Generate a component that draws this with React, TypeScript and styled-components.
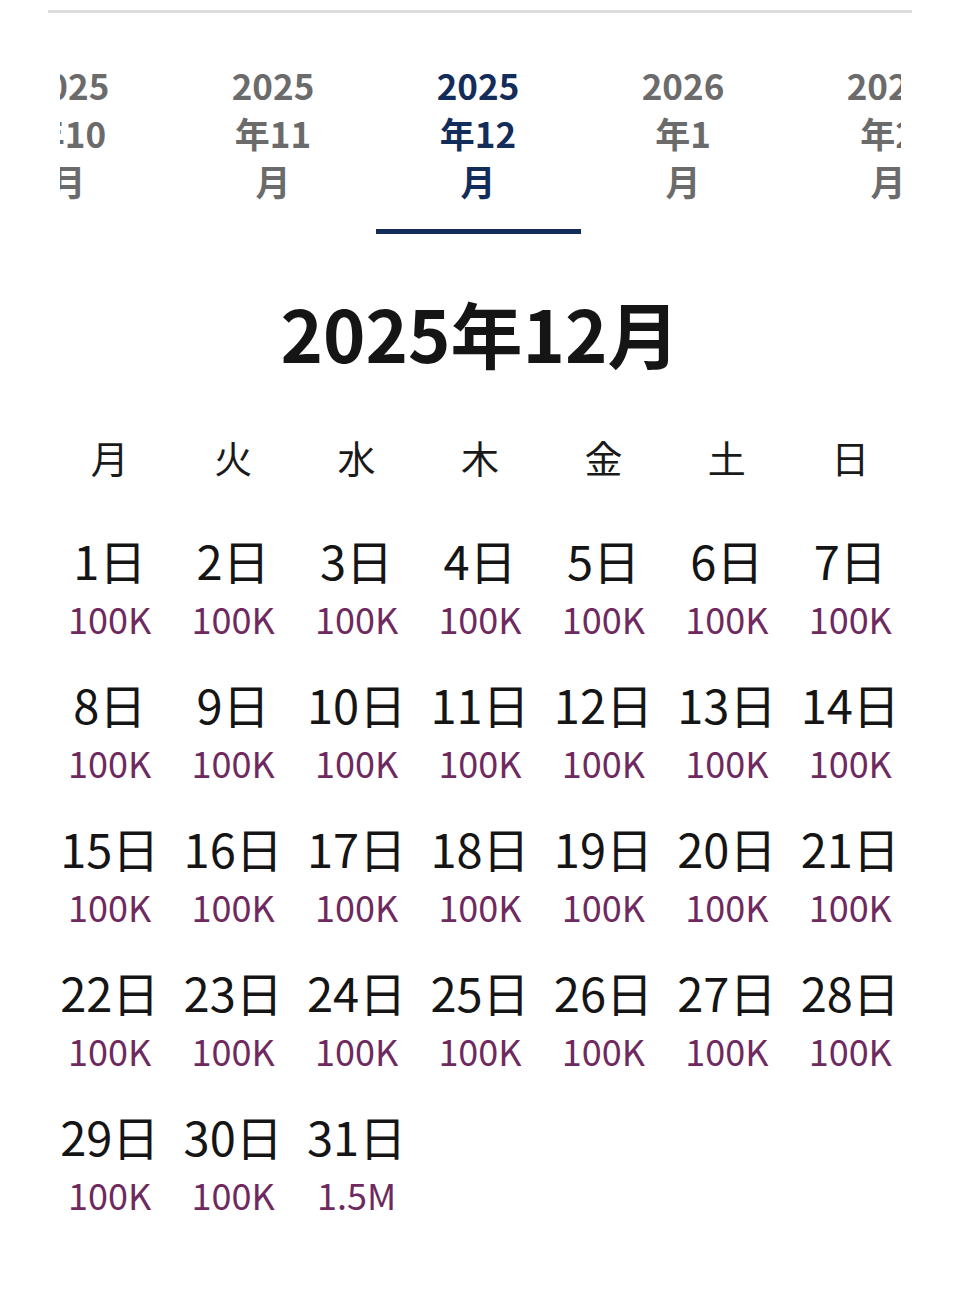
import React from "react";
import styled, { createGlobalStyle } from "styled-components";

const GlobalStyle = createGlobalStyle`
  html, body { margin: 0; padding: 0; background: #ffffff; }
  body { font-family: "Noto Sans CJK JP", "Noto Sans", sans-serif; }
`;

const Page = styled.div`
  padding: 10px 47px 40px 48px;
`;

const Divider = styled.div`
  height: 3px;
  background: #dddddd;
`;

const TabStrip = styled.div`
  margin: 48px 11px 0 12px;
  overflow: hidden;
`;

const TabTrack = styled.div`
  display: flex;
  margin-left: -94.5px;
`;

const Tab = styled.div<{ $active?: boolean }>`
  flex: 0 0 205px;
  display: flex;
  justify-content: center;
  padding-bottom: 24px;
  border-bottom: 5px solid ${(p) => (p.$active ? "#132d5a" : "transparent")};
  color: ${(p) => (p.$active ? "#132d5a" : "#6b6b6b")};
`;

const TabLabel = styled.div`
  width: 86px;
  text-align: center;
  font-size: 35px;
  font-weight: 700;
  line-height: 48px;
`;

const Title = styled.h1`
  margin: 53px 0 0;
  text-align: center;
  font-size: 72px;
  font-weight: 700;
  line-height: 90px;
  color: #151515;
`;

const Grid = styled.div`
  display: grid;
  grid-template-columns: repeat(7, 1fr);
`;

const WeekRow = styled(Grid)`
  margin-top: 55px;
`;

const WeekDay = styled.div`
  text-align: center;
  font-size: 38px;
  line-height: 50px;
  color: #1a1a1a;
`;

const DayGrid = styled(Grid)`
  margin-top: 49px;
  row-gap: 28px;
`;

const Cell = styled.div`
  display: flex;
  flex-direction: column;
  align-items: center;
`;

const DayNum = styled.div`
  font-size: 47px;
  line-height: 58px;
  color: #151515;
  white-space: nowrap;
`;

const Price = styled.div`
  font-size: 36px;
  line-height: 58px;
  color: #6e2a5f;
  white-space: nowrap;
`;

const tabs = [
  { label: "2025年10月" },
  { label: "2025年11月" },
  { label: "2025年12月", active: true },
  { label: "2026年1月" },
  { label: "2026年2月" },
];

const weekdays = ["月", "火", "水", "木", "金", "土", "日"];

const days = Array.from({ length: 31 }, (_, i) => ({
  day: i + 1,
  price: i === 30 ? "1.5M" : "100K",
}));

export default function App() {
  return (
    <>
      <GlobalStyle />
      <Page>
        <Divider />
        <TabStrip>
          <TabTrack>
            {tabs.map((t) => (
              <Tab key={t.label} $active={t.active}>
                <TabLabel>{t.label}</TabLabel>
              </Tab>
            ))}
          </TabTrack>
        </TabStrip>
        <Title>2025年12月</Title>
        <WeekRow>
          {weekdays.map((w) => (
            <WeekDay key={w}>{w}</WeekDay>
          ))}
        </WeekRow>
        <DayGrid>
          {days.map((d) => (
            <Cell key={d.day}>
              <DayNum>{d.day}日</DayNum>
              <Price>{d.price}</Price>
            </Cell>
          ))}
        </DayGrid>
      </Page>
    </>
  );
}
